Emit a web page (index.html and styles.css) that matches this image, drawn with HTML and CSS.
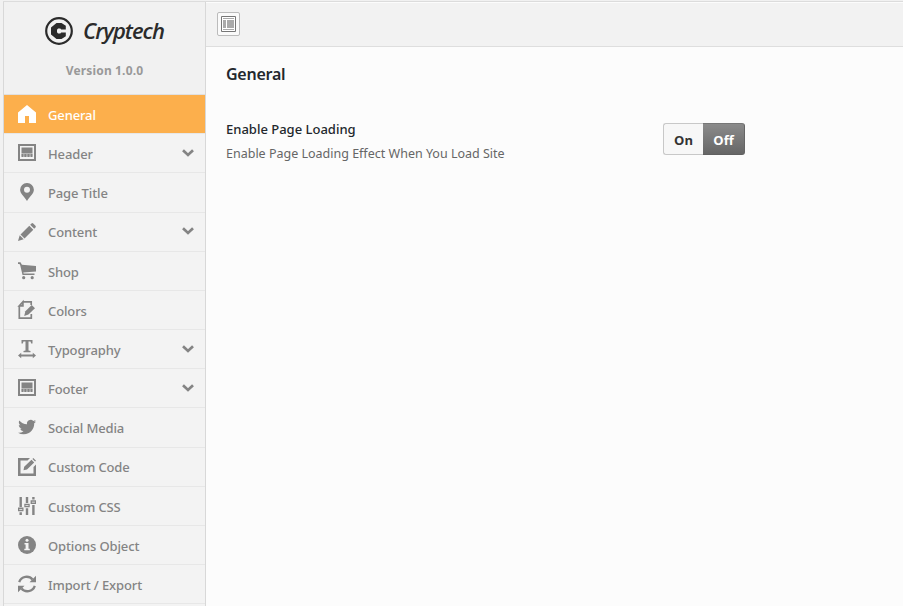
FILE: index.html
```html
<!DOCTYPE html>
<html lang="en">
<head>
<meta charset="utf-8">
<title>Cryptech Options</title>
<link rel="stylesheet" href="styles.css">
</head>
<body>
<svg class="defs" width="0" height="0">
  <symbol id="layout" viewBox="0 0 18 18"><path fill-rule="evenodd" d="M0 0h18v17H0zM2 2v13h14V2z"/><path d="M3.500 3.500h11v5.700h-11zM3.500 9.900h2v3h-2zM6.300 9.900h2.200v3H6.300zM9.400 9.900h2.200v3H9.400zM12.500 9.900h2v3h-2z"/><path d="M3.500 9h11v3.500h-11z" opacity=".4"/></symbol>
  <symbol id="chevron" viewBox="0 0 12 8"><path d="M1 1.300 6 6l5-4.700" fill="none" stroke="currentColor" stroke-width="2.700"/></symbol>
</svg>
<div class="panel">
  <aside class="sidebar">
    <div class="brand">
      <div class="logo">
        <svg class="mark" viewBox="0 0 28 28"><circle cx="14" cy="14" r="12.800" fill="none" stroke="currentColor" stroke-width="2.200"/><path fill="currentColor" d="M11.500 6h5l4.300 2.800v3.600h-4.600l-.9-.9h-2.200L12 12.800v2.400l1.100 1.300h2.200l.9-.9h4.600v3.600L16.500 22h-5L6 17.500v-7z"/></svg>
        <span class="name">Cryptech</span>
      </div>
      <div class="version">Version 1.0.0</div>
    </div>
    <nav class="menu">
      <a class="item active"><svg class="icon" viewBox="0 0 18 18"><path d="M9 0 0 7.500V18h7v-7h4v7h7V7.500z"/></svg><span>General</span></a>
      <a class="item"><svg class="icon"><use href="#layout"/></svg><span>Header</span><svg class="chev"><use href="#chevron"/></svg></a>
      <a class="item"><svg class="icon" viewBox="0 0 18 18"><path fill-rule="evenodd" d="M9 0a6.700 6.700 0 0 1 6.900 6.700C15.900 10.500 12 13 9 18 6 13 2.100 10.500 2.100 6.700A6.700 6.700 0 0 1 9 0zm0 3.700a3 3 0 1 0 0 6 3 3 0 0 0 0-6z"/></svg><span>Page Title</span></a>
      <a class="item"><svg class="icon" viewBox="0 0 18 18"><path d="M12.200 1.800 13.500.5q.8-.8 1.700 0l2.300 2.300q.8.800 0 1.700l-1.300 1.300zM11.300 2.700l4 4-8.800 8.800-4-4zM1.700 12.300l4 4L0 18z"/></svg><span>Content</span><svg class="chev"><use href="#chevron"/></svg></a>
      <a class="item"><svg class="icon" viewBox="0 0 18 18"><path d="M0 .3h2.500l1.400 2.400L18 4v5.500L5.300 10.600l.4 1H16.500V13H4.500L2.200 3.300 1.500 2H0z"/><circle cx="5.700" cy="15.700" r="1.600"/><circle cx="14.200" cy="15.700" r="1.600"/></svg><span>Shop</span></a>
      <a class="item"><svg class="icon" viewBox="0 0 18 18"><path d="M4.800.9h8.400V4M1.300 4.800v12.300h12V13M4.900.9 1.300 4.800h3.600z" fill="none" stroke="currentColor" stroke-width="1.700"/><path d="m13.700 4 3.300 3.300-6.600 6.300-4.200 1.500 1.200-4.800z"/></svg><span>Colors</span></a>
      <a class="item"><svg class="icon" viewBox="0 0 18 18"><path d="M3.500 0h11v3.500h-1.300L12.500 1.500h-2v9l2 .5v1.200h-7V11l2-.5v-9h-2L4.800 3.500H3.500zM0 15.500l3.200-2.700v1.800h11.600v-1.800l3.200 2.700-3.200 2.700v-1.800H3.200v1.800z"/></svg><span>Typography</span><svg class="chev"><use href="#chevron"/></svg></a>
      <a class="item"><svg class="icon"><use href="#layout"/></svg><span>Footer</span><svg class="chev"><use href="#chevron"/></svg></a>
      <a class="item"><svg class="icon" viewBox="0 0 18 18"><path d="M18 3.400q-.9.400-2 .6 1.100-.7 1.600-2-1 .6-2.300.9A3.700 3.700 0 0 0 9 6.200Q4.200 6 1.300 2.500C.4 4 .8 6.200 2.400 7.400q-.8 0-1.600-.4.100 2.900 2.900 3.600-.8.200-1.600.1.800 2.300 3.400 2.500Q3.100 15 0 14.700 2.600 16.300 5.700 16.300c6.800 0 10.800-5.600 10.500-11q1.100-.8 1.800-1.900z"/></svg><span>Social Media</span></a>
      <a class="item"><svg class="icon" viewBox="0 0 18 18"><path d="M0 0h12L9.500 2.500h-7v13h13V9L18 6.500V18H0z"/><path d="m13.500 1.800 2.700 2.700L9 11.500l-3.500.8.700-3.500zM14.400.9 15.300 0 18 2.700l-.9.900z"/></svg><span>Custom Code</span></a>
      <a class="item"><svg class="icon" viewBox="0 0 18 18"><path d="M1.500 0h2.400v10H1.500zM0 10.500h5.500v3.700H0zM1.500 15.200h2.400V18H1.500zM7.800 0h2.400v6H7.800zM6.300 6.800h5.400v3.500H6.300zM7.800 11.200h2.400V18H7.800zM14.200 0h2.400v2.500h-2.400zM12.600 3.300H18V7h-5.400zM14.200 8h2.400v10h-2.400z"/><path class="cut" d="M1.300 12h3v.8h-3zM7.500 8.200h3V9h-3zM13.900 4.800h3v.8h-3z"/></svg><span>Custom CSS</span></a>
      <a class="item"><svg class="icon" viewBox="0 0 18 18"><circle cx="9" cy="9" r="9"/><circle class="cut" cx="9" cy="4.300" r="1.500"/><path class="cut" d="M6.500 7.100h4v5.700h1.300v1.400H6.300v-1.400h1.300V8.500H6.500z"/></svg><span>Options Object</span></a>
      <a class="item"><svg class="icon" viewBox="0 0 18 18"><path d="M1.200 7.200C3.200 1 11 .2 14.500 4.500M16.800 10.800C14.800 17 7 17.800 3.500 13.500" fill="none" stroke="currentColor" stroke-width="2.300"/><path d="M18 .8v6.500h-6.500zM0 17.200v-6.500h6.500z"/></svg><span>Import / Export</span></a>
    </nav>
  </aside>
  <main class="main">
    <header class="toolbar">
      <button class="expand"><svg viewBox="0 0 15 16"><path d="M.5.500h14v15H.5z" fill="#fff" stroke="#777"/><path d="M2 2h11v1H2zM2 4h3v8H2zM6 4h7v8H6zM2 13h11v1H2z" fill="#aaa"/></svg></button>
    </header>
    <section class="content">
      <h2>General</h2>
      <div class="field">
        <div class="label"><h3>Enable Page Loading</h3><p>Enable Page Loading Effect When You Load Site</p></div>
        <div class="switch"><span class="on">On</span><span class="off">Off</span></div>
      </div>
    </section>
  </main>
</div>
</body>
</html>
```
FILE: styles.css
```css
* { box-sizing: border-box; }
body { margin: 0; height: 606px; overflow: hidden; background: #f1f1f1; font-family: "Noto Sans", "Open Sans", sans-serif; }
.defs { display: block; height: 0; }
.panel { display: flex; height: 605px; margin: 1px 0 0 3px; border-top: 1px solid #dcdcdc; }
.sidebar { width: 203px; border: solid #d8d8d8; border-width: 0 1px; background: #f3f3f3; flex: none; }
.brand { height: 93px; border-bottom: 1px solid #e0e0e0; background: #f1f1f1; }
.logo { display: flex; align-items: center; height: 28px; padding-left: 41px; color: #2b2b2b; transform: translateY(15px); }
.mark { width: 28px; height: 28px; }
.name { margin: -3px 0 0 10px; font: italic 600 22px/28px "Open Sans", sans-serif; letter-spacing: -1px; }
.version { margin-top: 31px; text-align: center; font-size: 12px; line-height: 20px; font-weight: 700; letter-spacing: .15px; color: #999; }
.item { display: flex; align-items: center; height: 39.180px; padding: 0 11px 0 14px; border-bottom: 1px solid #e7e7e7; color: #848484; font-size: 13px; font-weight: 500; letter-spacing: -.13px; }
.item span { flex: 1; margin-left: 12px; padding-top: 1.500px; white-space: nowrap; }
.icon { width: 18px; height: 18px; fill: currentColor; overflow: visible; }
.cut { fill: #f3f3f3; }
.chev { width: 12px; height: 8px; margin-top: -1px; }
.active { background: #fcaf4c; color: #fff; }
.main { flex: 1; background: #fcfcfc; }
.toolbar { height: 45px; padding: 9px 11px; background: #f2f2f2; border-top: 1px solid #fcfcfc; border-bottom: 1px solid #dedede; }
.expand { display: flex; align-items: center; justify-content: center; width: 23px; height: 24px; padding: 0; border: 1px solid #bbb; border-radius: 2px; background: #fafafa; }
.expand svg { width: 15px; height: 16px; }
.content { padding: 15px 20px; color: #23282d; }
h2 { margin: 0; font-size: 16px; line-height: 24px; font-weight: 600; letter-spacing: -.25px; }
.field { display: flex; margin-top: 31px; }
.label { width: 437px; padding-top: 1px; }
h3 { margin: 0; font-size: 13px; line-height: 22px; font-weight: 500; }
p { margin: 3px 0 0; font-size: 12.500px; line-height: 22px; color: #666; }
.switch { display: flex; margin-top: 6px; width: 82px; height: 32px; font: 700 13px/32px "Open Sans", sans-serif; text-align: center; }
.switch span { border: 1px solid #c8c8c8; }
.switch .on { width: 40px; border-right: 0; border-radius: 3px 0 0 3px; background: #f7f7f7; color: #333; }
.switch .off { width: 42px; border-color: #777 #666 #606060; border-left: 0; border-radius: 0 3px 3px 0; background: linear-gradient(#8b8b8b, #666); color: #fff; }
```
